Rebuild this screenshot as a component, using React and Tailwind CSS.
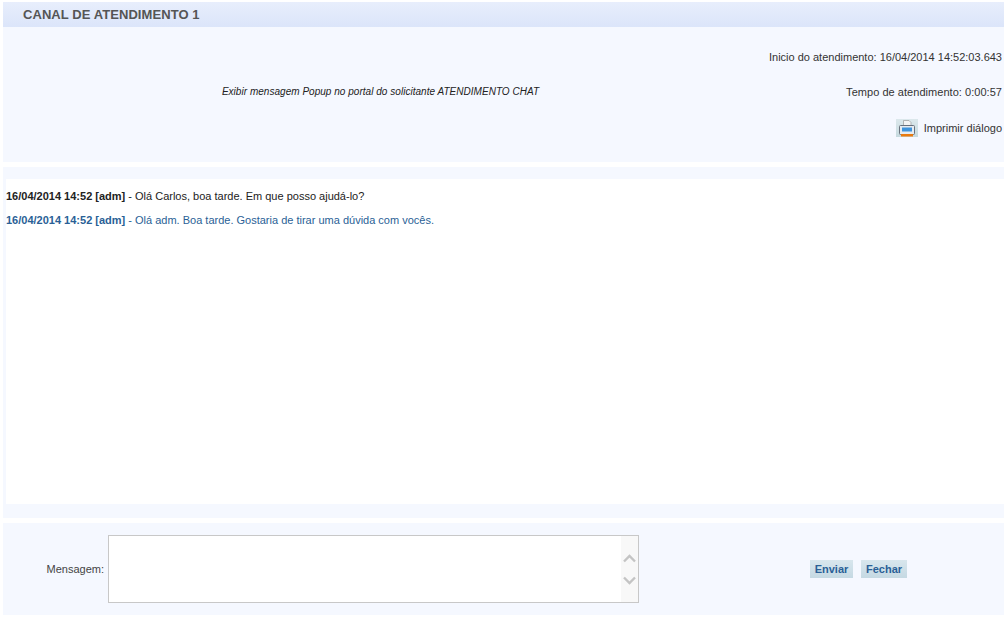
export default function App() {
  return (
    <div className="w-[1004px] h-[624px] bg-white pl-[3px] pt-[2px] overflow-hidden font-['Liberation_Sans',Arial,sans-serif] text-[11px] text-[#222]">
      <div className="h-[25px] bg-gradient-to-b from-[#e8eefc] to-[#dbe5fa] pl-5 flex items-center text-[13px] tracking-[0.07px] font-bold text-[#555]">
        CANAL DE ATENDIMENTO 1
      </div>
      <div className="h-[135px] bg-[#f5f8ff] flex">
        <div className="w-[757px] flex items-center justify-center pb-[7px] italic text-[10px] tracking-[0.03px] text-[#222]">
          <span className="ml-[-2px]">Exibir mensagem Popup no portal do solicitante ATENDIMENTO CHAT</span>
        </div>
        <div className="flex-1 flex flex-col items-end pt-[24px] pr-[2px] gap-[22px] text-[#333]">
          <div className="h-[13px] leading-[13px]">Inicio do atendimento: 16/04/2014 14:52:03.643</div>
          <div className="h-[13px] leading-[13px] tracking-[0.04px]">Tempo de atendimento: 0:00:57</div>
          <div className="h-[18px] flex items-center gap-[6px] mt-[-2px]">
            <div className="w-[22px] h-[18px] bg-gradient-to-b from-[#dce8ec] to-[#c6dadf] flex items-center justify-center">
              <svg width="18" height="17" viewBox="0 0 18 17">
                <path d="M5.5 0.5 H11 L13 2.5 V6 H5.5 Z" fill="#f4f4f4" stroke="#a4a4a4" strokeWidth="0.8" />
                <rect x="1.5" y="5.5" width="15" height="9" rx="1" fill="#e6ebf0" stroke="#69717d" />
                <rect x="4" y="7.5" width="10" height="4" fill="#3f94dc" />
                <rect x="3" y="14" width="12" height="2.5" fill="#e87a10" />
              </svg>
            </div>
            <span>Imprimir diálogo</span>
          </div>
        </div>
      </div>
      <div className="mt-[5px] h-[351px] bg-[#f5f8ff] pt-[12px] pl-[3px] pb-[14px]">
        <div className="h-[325px] bg-white pt-[11px] flex flex-col gap-[11px]">
          <div className="h-[13px] leading-[13px]"><b>16/04/2014 14:52 [adm]</b> - Olá Carlos, boa tarde. Em que posso ajudá-lo?</div>
          <div className="h-[13px] leading-[13px] text-[#2a5f96]"><b>16/04/2014 14:52 [adm]</b> - Olá adm. Boa tarde. Gostaria de tirar uma dúvida com vocês.</div>
        </div>
      </div>
      <div className="mt-[5px] h-[92px] bg-[#f5f8ff] flex items-start pt-[12px]">
        <div className="w-[101px] h-[68px] flex items-center justify-end text-[#444]">Mensagem:</div>
        <div className="ml-[4px] w-[531px] h-[68px] border border-[#c8c8c8] bg-white flex justify-end">
          <div className="w-[17px] h-full bg-[#f8f8f8] flex flex-col items-center justify-center gap-[13px]">
            <svg width="13" height="9" viewBox="0 0 13 9"><path d="M1 7.5 L6.5 2 L12 7.5" fill="none" stroke="#c4c4c4" strokeWidth="2.4" /></svg>
            <svg width="13" height="9" viewBox="0 0 13 9"><path d="M1 1.5 L6.5 7 L12 1.5" fill="none" stroke="#c4c4c4" strokeWidth="2.4" /></svg>
          </div>
        </div>
        <div className="ml-[171px] h-[68px] flex items-center gap-[8px]">
          <div className="w-[43px] h-[18px] bg-gradient-to-b from-[#d8e6ed] to-[#c5d9e3] flex items-center justify-center font-bold text-[#2a5f96]">Enviar</div>
          <div className="w-[46px] h-[18px] bg-gradient-to-b from-[#d8e6ed] to-[#c5d9e3] flex items-center justify-center font-bold text-[#2a5f96]">Fechar</div>
        </div>
      </div>
    </div>
  );
}
